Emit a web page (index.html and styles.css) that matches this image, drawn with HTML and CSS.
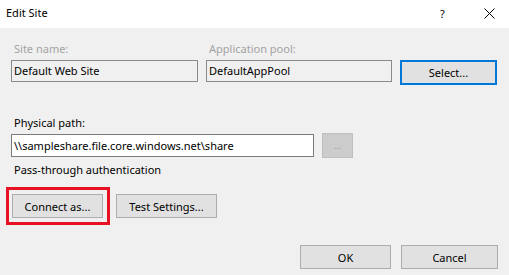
FILE: index.html
```html
<!DOCTYPE html>
<html lang="en">
  <head>
    <meta charset="UTF-8" />
    <title>Edit Site</title>
    <link rel="stylesheet" href="styles.css">
  </head>
  <body>
    <div class="dialog">
      <div class="title-bar">
        <span class="title">Edit Site</span>
        <span class="help">?</span>
        <span class="close">
          <svg width="11" height="11" viewBox="0 0 11 11">
            <path d="M0.5 0.5 L10.5 10.5 M10.5 0.5 L0.5 10.5" stroke="#000" stroke-width="1" fill="none" />
          </svg>
        </span>
      </div>

      <div class="content">
        <div class="site-grid">
          <label class="label disabled">Site name:</label>
          <label class="label disabled">Application pool:</label>
          <span></span>
          <div class="textbox readonly">Default Web Site</div>
          <div class="textbox readonly">DefaultAppPool</div>
          <button class="btn btn-default">Select...</button>
        </div>

        <label class="label path-label">Physical path:</label>
        <div class="path-row">
          <div class="textbox">\\sampleshare.file.core.windows.net\share</div>
          <button class="btn btn-browse" disabled>...</button>
        </div>
        <div class="auth-text">Pass-through authentication</div>

        <div class="auth-row">
          <div class="highlight">
            <button class="btn btn-connect">Connect as...</button>
          </div>
          <button class="btn btn-test">Test Settings...</button>
        </div>

        <div class="footer">
          <button class="btn btn-ok">OK</button>
          <button class="btn btn-cancel">Cancel</button>
        </div>
      </div>
    </div>
  </body>
</html>
```

FILE: styles.css
```css
* {
  margin: 0;
  padding: 0;
  box-sizing: border-box;
}

body {
  font-family: "Noto Sans", "Open Sans", sans-serif;
  font-size: 11px;
  color: #000;
  background-color: #f0f0f0;
  width: 509px;
  height: 275px;
  overflow: hidden;
}

.title-bar {
  height: 28px;
  background-color: #fff;
  display: flex;
  align-items: center;
  padding-left: 6px;
}

.title {
  flex: 1;
  line-height: 16px;
  margin-top: -2px;
}

.help {
  width: 12px;
  margin-right: 32px;
  margin-top: -2px;
}

.close {
  display: flex;
  width: 11px;
  margin-right: 14px;
  margin-top: -2px;
}

.content {
  padding: 13px 11px 0 11px;
}

.label {
  display: block;
  line-height: 16px;
  padding-left: 3px;
}

.label.disabled {
  color: #a3a3a3;
}

.site-grid {
  display: grid;
  grid-template-columns: 187px 186px 97px;
  column-gap: 8px;
  row-gap: 3px;
  align-items: start;
}

.textbox {
  height: 22px;
  border: 1px solid #7a7a7a;
  background-color: #fff;
  padding-left: 2px;
  line-height: 20px;
  white-space: nowrap;
  overflow: hidden;
}

.textbox.readonly {
  background-color: #f0f0f0;
  border-color: #8a8a8a;
}

.btn {
  font-family: inherit;
  font-size: 11px;
  color: #000;
  height: 24px;
  background-color: #e1e1e1;
  border: 1px solid #adadad;
  cursor: pointer;
}

.btn-default {
  height: 25px;
  border: 2px solid #0078d7;
}

.path-label {
  margin-top: 30px;
  margin-bottom: 2px;
}

.path-row {
  display: grid;
  grid-template-columns: 303px 31px;
  column-gap: 8px;
  align-items: center;
}

.path-row .textbox {
  height: 23px;
  line-height: 21px;
}

.btn-browse {
  height: 25px;
  background-color: #cccccc;
  border-color: #bfbfbf;
  color: #9a9a9a;
  cursor: default;
  font-size: 9px;
}

.auth-text {
  margin-top: 4px;
  padding-left: 3px;
  line-height: 16px;
}

.auth-row {
  display: flex;
  align-items: center;
  margin-top: 9px;
  margin-left: -5px;
}

.highlight {
  border: 3px solid #e81123;
  padding: 4px 4px 4px 3px;
}

.btn-connect {
  width: 91px;
  display: block;
}

.btn-test {
  width: 101px;
  margin-left: 6px;
}

.footer {
  display: flex;
  justify-content: flex-end;
  gap: 10px;
  margin-top: 20px;
}

.btn-ok {
  width: 91px;
}

.btn-cancel {
  width: 97px;
}
```
